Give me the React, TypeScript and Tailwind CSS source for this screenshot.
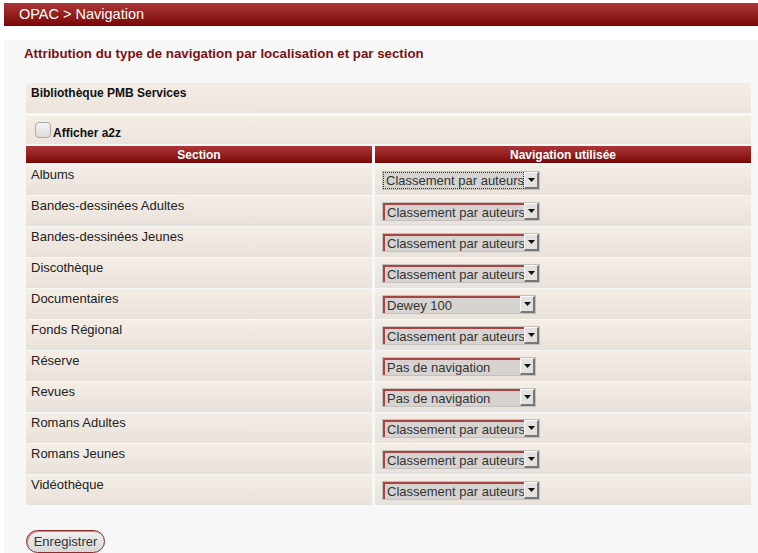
import React from "react";

const rows: [string, string][] = [
  ["Albums", "Classement par auteurs"],
  ["Bandes-dessinées Adultes", "Classement par auteurs"],
  ["Bandes-dessinées Jeunes", "Classement par auteurs"],
  ["Discothèque", "Classement par auteurs"],
  ["Documentaires", "Dewey 100"],
  ["Fonds Régional", "Classement par auteurs"],
  ["Réserve", "Pas de navigation"],
  ["Revues", "Pas de navigation"],
  ["Romans Adultes", "Classement par auteurs"],
  ["Romans Jeunes", "Classement par auteurs"],
  ["Vidéothèque", "Classement par auteurs"],
];

function Select({ value, first }: { value: string; first: boolean }) {
  const wide = value === "Classement par auteurs";
  return (
    <div
      className={`flex h-[19px] items-stretch border border-[#c4c0bc] bg-[#d6d3d0] ${wide ? "w-[158px]" : "w-[154px]"}`}
    >
      <div
        className={`flex min-w-0 flex-1 items-center whitespace-nowrap pl-[2px] text-[13px] leading-none text-[#333] ${first ? "border border-dotted border-[#333]" : "border-l-2 border-t-2 border-l-[#a84444] border-t-[#a84444]"}`}
      >
        {value}
      </div>
      <div className="flex w-[15px] shrink-0 items-center justify-center border-b-2 border-l border-r-2 border-t border-b-[#777] border-l-[#fafafa] border-r-[#777] border-t-[#fafafa] bg-[#e4e2e0]">
        <svg width="7" height="4" viewBox="0 0 7 4">
          <path d="M0 0h7L3.5 4z" fill="#111" />
        </svg>
      </div>
    </div>
  );
}

export default function App() {
  return (
    <div
      className="min-h-[553px] w-[758px] bg-white pt-[3px]"
      style={{ fontFamily: '"Liberation Sans", Arial, sans-serif' }}
    >
      <div className="ml-[4px] flex h-[23px] items-center bg-gradient-to-b from-[#ad3535] to-[#780505] pl-[15px] text-[14.5px] text-white">
        OPAC &gt; Navigation
      </div>
      <div className="ml-[4px] mt-[14px] bg-[#f7f7f7] pb-[1px] pt-[4px]">
        <div className="pl-[20px] text-[13.3px] font-bold leading-[19px] text-[#7a1212]">
          Attribution du type de navigation par localisation et par section
        </div>
        <div className="ml-[22px] mt-[20px] w-[725px]">
          <div className="h-[30px] bg-gradient-to-b from-[#f5eee6] to-[#ebe4dd] pl-[5px] pt-[1px] text-[12px] font-bold text-[#111]">
            Bibliothèque PMB Services
          </div>
          <div className="mt-[3px] flex h-[28px] items-end bg-gradient-to-b from-[#f5eee6] to-[#ebe4dd] pb-[5px] pl-[9px] text-[12px] font-bold text-[#111]">
            <div className="mb-[1px] mr-[2px] h-[16px] w-[16px] rounded-[4px] border border-[#aaa] bg-gradient-to-b from-[#f4f4f4] to-[#dcdcdc]" />
            <span className="leading-none">Afficher a2z</span>
          </div>
          <div className="mt-[2px] grid grid-cols-[346px_376px] gap-x-[3px] gap-y-[2px]">
            <div className="flex h-[17px] items-center justify-center bg-gradient-to-b from-[#ad3535] to-[#780505] text-[12px] font-bold text-white">
              Section
            </div>
            <div className="flex h-[17px] items-center justify-center bg-gradient-to-b from-[#ad3535] to-[#780505] text-[12px] font-bold text-white">
              Navigation utilisée
            </div>
          </div>
          <div className="mt-[2px] grid grid-cols-[346px_376px] gap-x-[3px] gap-y-[1px]">
            {rows.map(([name, nav], i) => (
              <React.Fragment key={name}>
                <div className="h-[30px] bg-gradient-to-b from-[#f5eee6] to-[#e8e2dc] pl-[5px] pt-[1px] text-[13px] leading-[18px] text-[#222]">
                  {name}
                </div>
                <div className="h-[30px] bg-gradient-to-b from-[#f5eee6] to-[#e8e2dc] pl-[7px] pt-[6px]">
                  <Select value={nav} first={i === 0} />
                </div>
              </React.Fragment>
            ))}
          </div>
          <div className="mt-[24px] pb-[1px]">
            <button className="h-[23px] w-[79px] rounded-full border border-[#8a2a2a] bg-gradient-to-b from-[#f0f0f0] to-[#d8d8d8] text-[13px] text-[#333] shadow-[inset_1px_1px_0_#c88]">
              Enregistrer
            </button>
          </div>
        </div>
      </div>
    </div>
  );
}
